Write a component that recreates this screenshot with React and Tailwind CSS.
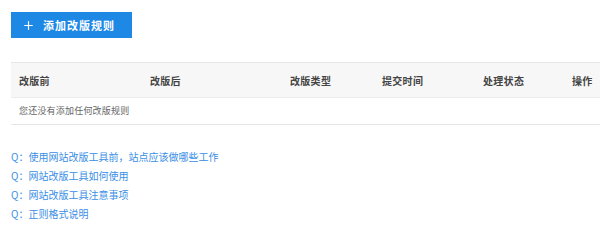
import { Plus } from "lucide-react";

const COLUMNS = [
  { label: "改版前", w: "w-[131px]" },
  { label: "改版后", w: "w-[140px]" },
  { label: "改版类型", w: "w-[92px]" },
  { label: "提交时间", w: "w-[101px]" },
  { label: "处理状态", w: "w-[89px]" },
  { label: "操作", w: "flex-1" },
];

const QUESTIONS = [
  "使用网站改版工具前，站点应该做哪些工作",
  "网站改版工具如何使用",
  "网站改版工具注意事项",
  "正则格式说明",
];

export default function App() {
  return (
    <div
      className="w-[600px] h-[231px] bg-white overflow-hidden pl-[11px] pt-[12px]"
      style={{ fontFamily: '"Noto Sans CJK SC", "Noto Sans", sans-serif' }}
    >
      <button
        type="button"
        className="flex items-center h-[26px] w-[121px] bg-[#1e88e5] text-white pl-[11px]"
      >
        <Plus className="w-[13px] h-[13px]" strokeWidth={2.2} />
        <span className="ml-[8px] text-[11px] font-bold tracking-[1px] leading-none">
          添加改版规则
        </span>
      </button>

      {/* Rules table */}
      <div className="mt-[24px] border-t border-[#e6e6e6]">
        <div className="flex items-center h-[35px] bg-[#f7f7f7] pl-[8px] border-b border-[#ececec]">
          {COLUMNS.map((c) => (
            <div
              key={c.label}
              className={`${c.w} text-[10px] font-bold text-[#444] tracking-[0.3px]`}
            >
              {c.label}
            </div>
          ))}
        </div>
        <div className="flex items-center h-[27px] pl-[8px] border-b border-[#e6e6e6] text-[9px] text-[#666] tracking-[0.2px]">
          您还没有添加任何改版规则
        </div>
      </div>

      {/* FAQ links */}
      <div className="mt-[24px] flex flex-col gap-[4px]">
        {QUESTIONS.map((q) => (
          <a
            key={q}
            href="#"
            className="text-[10px] leading-[15px] text-[#3a8ee6]"
          >
            Q：{q}
          </a>
        ))}
      </div>
    </div>
  );
}
